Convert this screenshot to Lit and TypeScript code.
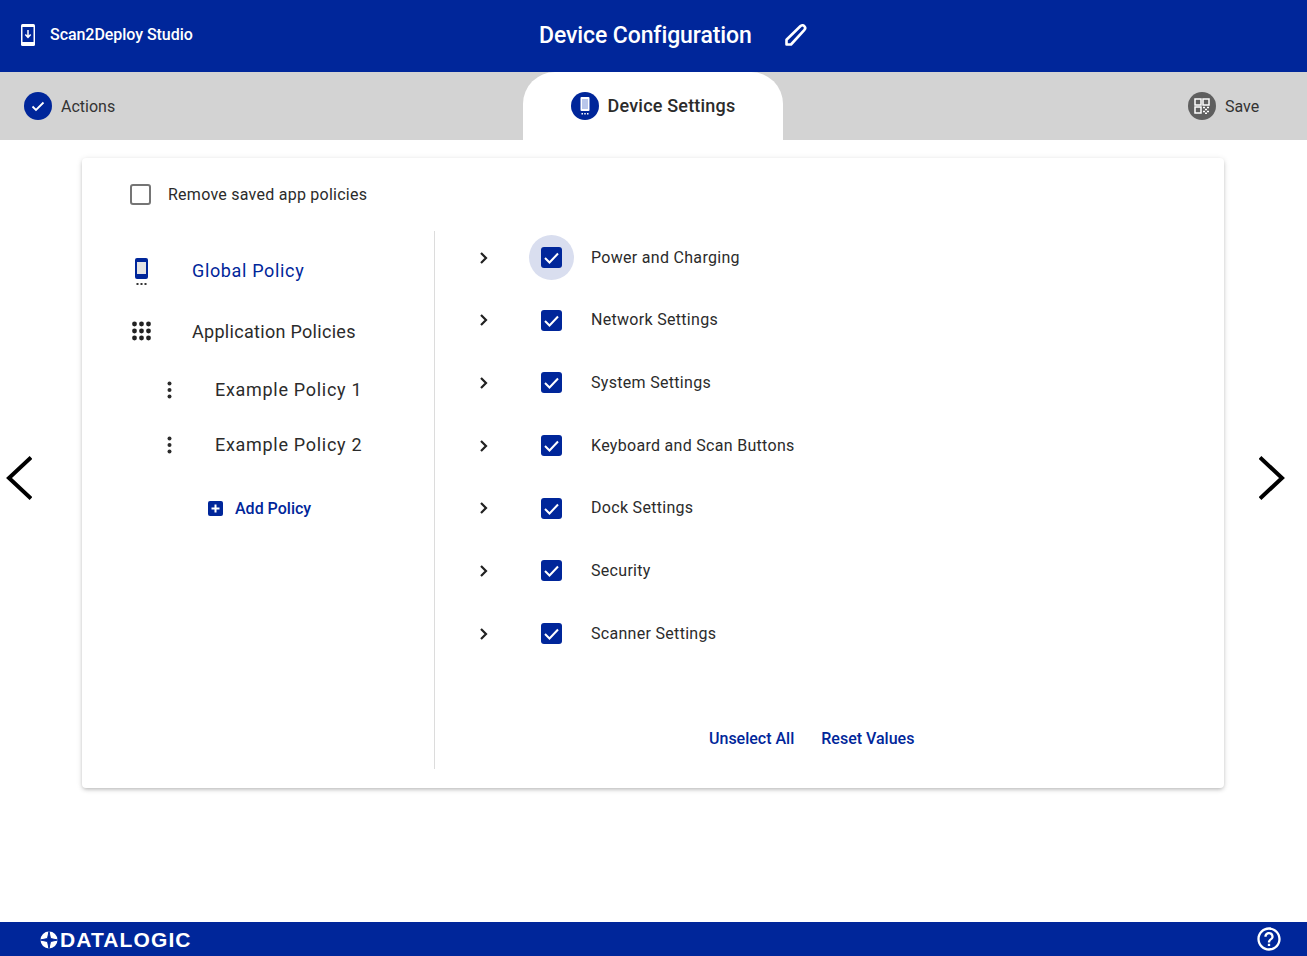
import { LitElement, css, html, svg } from 'lit';
import { customElement } from 'lit/decorators.js';

const SETTINGS = [
  'Power and Charging',
  'Network Settings',
  'System Settings',
  'Keyboard and Scan Buttons',
  'Dock Settings',
  'Security',
  'Scanner Settings',
];

const kebab = html`<svg class="kebab" width="6" height="18" viewBox="0 0 6 18">
  <circle cx="2.500" cy="2.500" r="2" /><circle cx="2.500" cy="9" r="2" /><circle cx="2.500" cy="15.500" r="2" />
</svg>`;

const gridDots = [4, 11, 18].flatMap((y) =>
  [2.500, 9.500, 16.500].map((x) => svg`<circle cx=${x} cy=${y} r="2.400" />`)
);

@customElement('app-root')
export class AppRoot extends LitElement {
  static styles = css`
    :host {
      --blue: #00269a;
      --ink: #2b2b2b;
      display: flex;
      flex-direction: column;
      height: 100vh;
      min-height: 956px;
      font-family: Roboto, 'Noto Sans', sans-serif;
      color: var(--ink);
      background: #fff;
      overflow: hidden;
    }

    * {
      box-sizing: border-box;
    }

    svg {
      display: block;
      flex: none;
    }

    /* top bar */
    .top {
      height: 72px;
      flex: none;
      display: flex;
      align-items: center;
      background: var(--blue);
      color: #fff;
    }
    .brand {
      width: 539px;
      display: flex;
      align-items: center;
      padding-left: 21px;
      gap: 15px;
      font-size: 16px;
      font-weight: 500;
      letter-spacing: -0.05px;
      margin-top: -3px;
    }
    .title {
      font-size: 23px;
      font-weight: 500;
      letter-spacing: -0.1px;
      width: 246px;
      margin-top: -2px;
    }
    .pencil {
      margin-top: -2px;
    }

    /* tabs */
    .tabs {
      height: 68px;
      flex: none;
      display: flex;
      background: #d3d3d3;
    }
    .step {
      display: flex;
      align-items: center;
      font-size: 16px;
      color: #333;
    }
    .step.actions {
      width: 523px;
      padding-left: 24px;
      gap: 9px;
    }
    .step.device {
      width: 260px;
      justify-content: center;
      gap: 9px;
      background: #fff;
      border-radius: 32px 32px 0 0;
      font-size: 18px;
      font-weight: 500;
      letter-spacing: 0.2px;
      color: var(--ink);
    }
    .step.device span {
      margin-bottom: 2px;
    }
    .step.save {
      margin-left: 405px;
      gap: 9px;
    }
    .dot {
      width: 28px;
      height: 28px;
      flex: none;
      border-radius: 50%;
      display: flex;
      align-items: center;
      justify-content: center;
      background: var(--blue);
    }
    .dot.grey {
      background: #5f5f5f;
    }

    /* main */
    .main {
      flex: 1;
      display: flex;
      padding-top: 18px;
    }
    .side {
      width: 82px;
      flex: none;
      padding: 298px 0 0 6px;
    }
    .side.next {
      width: 83px;
      padding-left: 35px;
    }
    .card {
      width: 1142px;
      height: 630px;
      flex: none;
      border-radius: 4px;
      background: #fff;
      box-shadow: 0 2px 4px -1px rgba(0, 0, 0, 0.25), 0 1px 6px rgba(0, 0, 0, 0.1);
    }
    .remove {
      height: 37px;
      margin: 18px 0 13px;
      display: flex;
      align-items: center;
      padding-left: 48px;
      gap: 17px;
      font-size: 16px;
      letter-spacing: 0.25px;
    }
    .empty-box {
      width: 21px;
      height: 21px;
      flex: none;
      border: 2px solid #757575;
      border-radius: 3px;
    }
    .columns {
      display: flex;
    }

    /* left policies */
    .policies {
      width: 352px;
      flex: none;
      padding-top: 14px;
    }
    .policy {
      display: flex;
      align-items: center;
      font-size: 18px;
    }
    .policy.global {
      height: 60px;
      padding-left: 51px;
      gap: 42px;
      letter-spacing: 0.65px;
      color: var(--blue);
    }
    .policy.global svg {
      margin-top: 4px;
    }
    .policy.apps {
      height: 62px;
      padding-left: 50px;
      gap: 38px;
      letter-spacing: 0.3px;
    }
    .policy.example {
      height: 55px;
      padding-left: 85px;
      gap: 42px;
      letter-spacing: 0.7px;
    }
    .kebab {
      fill: var(--ink);
    }
    .add {
      height: 40px;
      margin-top: 16px;
      padding-left: 126px;
      display: flex;
      align-items: center;
      gap: 12px;
      font-size: 16px;
      font-weight: 500;
      color: var(--blue);
    }
    .divider {
      width: 1px;
      height: 538px;
      flex: none;
      margin-top: 5px;
      background: #dcdcdc;
    }

    /* right settings */
    .settings {
      flex: 1;
      padding-top: 0.35px;
    }
    .setting {
      height: 62.67px;
      display: flex;
      align-items: center;
      padding-left: 37px;
      font-size: 16px;
      letter-spacing: 0.3px;
    }
    .setting span {
      margin-bottom: 1px;
    }
    .chev {
      margin-right: 33px;
    }
    .check {
      width: 45px;
      height: 45px;
      flex: none;
      margin-right: 17px;
      border-radius: 50%;
      display: flex;
      align-items: center;
      justify-content: center;
    }
    .check.focus {
      background: #d9deef;
    }
    .box {
      width: 21px;
      height: 21px;
      border-radius: 3px;
      background: var(--blue);
      display: flex;
      align-items: center;
      justify-content: center;
    }
    .links {
      height: 40px;
      margin-top: 54px;
      padding-left: 274px;
      display: flex;
      align-items: center;
      gap: 27px;
      font-size: 16px;
      font-weight: 500;
      color: var(--blue);
    }

    /* footer */
    .foot {
      height: 34px;
      flex: none;
      display: flex;
      align-items: center;
      padding: 0 24px 0 40px;
      background: var(--blue);
      color: #fff;
    }
    .logo {
      display: flex;
      align-items: center;
      gap: 2px;
      flex: 1;
      padding-top: 1px;
    }
    .logo-text {
      font-family: 'Liberation Sans', sans-serif;
      font-size: 21px;
      font-weight: 700;
      letter-spacing: 1.1px;
      line-height: 1;
    }
  `;

  private renderSetting(label: string, index: number) {
    return html`<div class="setting">
      <svg class="chev" width="24" height="24" viewBox="0 0 24 24" fill="none" stroke="#212121" stroke-width="2.200">
        <path d="M9 7l5 5-5 5" />
      </svg>
      <div class="check ${index === 0 ? 'focus' : ''}">
        <div class="box">
          <svg width="17" height="17" viewBox="0 0 17 17" fill="none" stroke="#fff" stroke-width="2">
            <path d="M2 9l4.500 4.500L15 4.500" />
          </svg>
        </div>
      </div>
      <span>${label}</span>
    </div>`;
  }

  render() {
    return html`
      <header class="top">
        <div class="brand">
          <svg width="14" height="22" viewBox="0 0 14 22">
            <rect width="14" height="22" rx="1.500" fill="#fff" />
            <rect x="1.500" y="3" width="11" height="15" fill="#00269a" />
            <path d="M7 6v7M4.300 10.500L7 13.300l2.700-2.800" fill="none" stroke="#fff" stroke-width="1.500" />
          </svg>
          <span>Scan2Deploy Studio</span>
        </div>
        <div class="title">Device Configuration</div>
        <svg class="pencil" width="22" height="22" viewBox="0 0 22 22" fill="none" stroke="#fff" stroke-width="2.600" stroke-linejoin="round">
          <path d="M1.500 20.500v-4.700L15.300 2.200c1.200-1.200 2.900-1.200 4 -.1s1.100 2.800 -.1 4L6 20.500z" />
        </svg>
      </header>

      <nav class="tabs">
        <div class="step actions">
          <div class="dot">
            <svg width="16" height="16" viewBox="0 0 16 16" fill="none" stroke="#fff" stroke-width="1.800">
              <path d="M2.500 8.500l3.500 3.500 7.500-7.500" />
            </svg>
          </div>
          <span>Actions</span>
        </div>
        <div class="step device">
          <div class="dot">
            <svg width="12" height="18" viewBox="0 0 12 18">
              <rect x="1.500" y="0" width="9" height="14" rx="1" fill="#fff" />
              <rect x="3" y="2" width="6" height="10" fill="#b9c6ea" />
              <rect x="2.500" y="16" width="1.500" height="1.500" fill="#fff" />
              <rect x="5.250" y="16" width="1.500" height="1.500" fill="#fff" />
              <rect x="8" y="16" width="1.500" height="1.500" fill="#fff" />
            </svg>
          </div>
          <span>Device Settings</span>
        </div>
        <div class="step save">
          <div class="dot grey">
            <svg width="16" height="16" viewBox="0 0 16 16" fill="none" stroke="#fff" stroke-width="1.500">
              <rect x="1" y="1" width="6" height="6" />
              <rect x="9" y="1" width="6" height="6" />
              <rect x="1" y="9" width="6" height="6" />
              <path d="M9 9.500h2M13 9.500h2M11 11.500h2M9 13.500h2M13 13.500h2M11 15.200h2" />
            </svg>
          </div>
          <span>Save</span>
        </div>
      </nav>

      <main class="main">
        <div class="side">
          <svg width="26" height="44" viewBox="0 0 26 44" fill="none" stroke="#000" stroke-width="4">
            <path d="M25 1.500L3 22l22 20.500" />
          </svg>
        </div>
        <section class="card">
          <label class="remove">
            <span class="empty-box"></span>
            <span>Remove saved app policies</span>
          </label>
          <div class="columns">
            <div class="policies">
              <div class="policy global">
                <svg width="17" height="28" viewBox="0 0 17 28">
                  <rect x="2" y="0" width="13" height="21" rx="2" fill="#00269a" />
                  <rect x="4" y="4" width="9" height="12" fill="#e4e4e4" />
                  <rect x="3.500" y="25" width="2" height="2" fill="#333" />
                  <rect x="7.500" y="25" width="2" height="2" fill="#333" />
                  <rect x="11.500" y="25" width="2" height="2" fill="#333" />
                </svg>
                <span>Global Policy</span>
              </div>
              <div class="policy apps">
                <svg width="22" height="22" viewBox="0 0 22 22" fill="#212121">${gridDots}</svg>
                <span>Application Policies</span>
              </div>
              <div class="policy example">${kebab}<span>Example Policy 1</span></div>
              <div class="policy example">${kebab}<span>Example Policy 2</span></div>
              <div class="add">
                <svg width="15" height="15" viewBox="0 0 15 15">
                  <rect width="15" height="15" rx="2" fill="#00269a" />
                  <path d="M7.500 3.500v8M3.500 7.500h8" stroke="#fff" stroke-width="2" />
                </svg>
                <span>Add Policy</span>
              </div>
            </div>
            <div class="divider"></div>
            <div class="settings">
              ${SETTINGS.map((label, i) => this.renderSetting(label, i))}
              <div class="links">
                <span>Unselect All</span>
                <span>Reset Values</span>
              </div>
            </div>
          </div>
        </section>
        <div class="side next">
          <svg width="26" height="44" viewBox="0 0 26 44" fill="none" stroke="#000" stroke-width="4">
            <path d="M1 1.500L23 22 1 42.500" />
          </svg>
        </div>
      </main>

      <footer class="foot">
        <div class="logo">
          <svg width="18" height="18" viewBox="0 0 18 18">
            <circle cx="9" cy="9" r="8.500" fill="#fff" />
            <path d="M9 0.500L10.500 7.500 17.500 9 10.500 10.500 9 17.500 7.500 10.500 0.500 9 7.500 7.500z" fill="#00269a" stroke="#00269a" />
          </svg>
          <span class="logo-text">DATALOGIC</span>
        </div>
        <svg width="28" height="28" viewBox="0 0 24 24" fill="#fff">
          <path d="M11 18h2v-2h-2v2zm1-16C6.480 2 2 6.480 2 12s4.480 10 10 10 10-4.480 10-10S17.520 2 12 2zm0 18c-4.410 0-8-3.590-8-8s3.590-8 8-8 8 3.590 8 8-3.590 8-8 8zm0-14c-2.210 0-4 1.790-4 4h2c0-1.100.9-2 2-2s2 .9 2 2c0 2-3 1.750-3 5h2c0-2.250 3-2.500 3-5 0-2.210-1.790-4-4-4z" />
        </svg>
      </footer>
    `;
  }
}
